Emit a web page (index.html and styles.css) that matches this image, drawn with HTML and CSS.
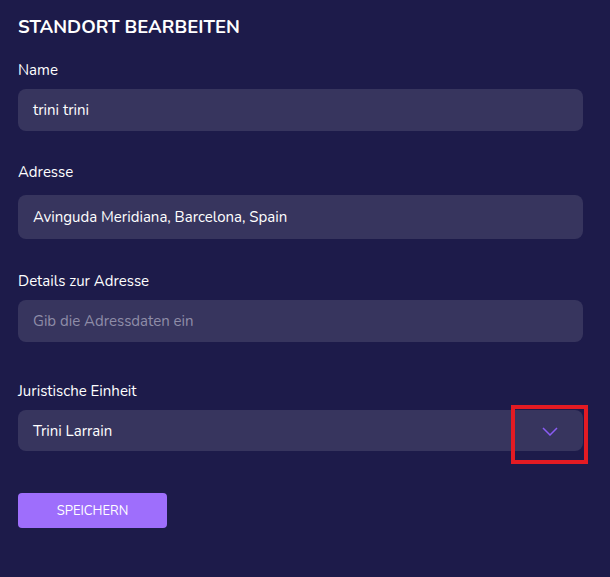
FILE: index.html
```html
<!DOCTYPE html>
<html lang="de">
<head>
<meta charset="utf-8">
<title>Standort bearbeiten</title>
<link rel="stylesheet" href="styles.css">
</head>
<body>
<form class="panel">
  <h1 class="title">STANDORT BEARBEITEN</h1>
  <div class="field">
    <label class="label">Name</label>
    <div class="input">trini trini</div>
  </div>
  <div class="field f-addr">
    <label class="label">Adresse</label>
    <div class="input tall">Avinguda Meridiana, Barcelona, Spain</div>
  </div>
  <div class="field f-details">
    <label class="label">Details zur Adresse</label>
    <div class="input placeholder">Gib die Adressdaten ein</div>
  </div>
  <div class="field f-entity">
    <label class="label">Juristische Einheit</label>
    <div class="input select">
      <span>Trini Larrain</span>
      <svg class="chev" width="16" height="9" viewBox="0 0 16 9"><path d="M1 1 L8 8 L15 1" fill="none" stroke="#8a5cf5" stroke-width="1.5"/></svg>
      <div class="highlight"></div>
    </div>
  </div>
  <button type="button" class="btn">SPEICHERN</button>
</form>
</body>
</html>
```
FILE: styles.css
```css
html, body { margin: 0; padding: 0; }
body {
  background: #1d1b4a;
  width: 610px;
  height: 577px;
  font-family: "Nunito", Lato, "Noto Sans", sans-serif;
  color: #ffffff;
}
.panel {
  padding: 14px 27px 0 18px;
  display: flex;
  flex-direction: column;
}
.title {
  margin: 0;
  font-size: 18.5px;
  font-weight: 700;
  line-height: 26px;
  letter-spacing: 0;
}
.field { display: flex; flex-direction: column; }
.field:first-of-type { margin-top: 20px; }
.label {
  font-size: 15px;
  line-height: 20px;
  margin-bottom: 9px;
}
.f-addr { margin-top: 31px; }
.f-addr .label { margin-bottom: 13px; }
.f-details { margin-top: 32px; }
.f-details .label { margin-bottom: 9px; }
.f-entity { margin-top: 39px; }
.f-entity .label { margin-bottom: 9px; }
.input {
  background: #37355e;
  border-radius: 8px;
  height: 42px;
  padding: 0 15px;
  display: flex;
  align-items: center;
  font-size: 15px;
}
.input.tall { height: 44px; }
.input.placeholder { color: #8f8da8; }
.select {
  position: relative;
  justify-content: space-between;
  height: 41px;
  padding-right: 25px;
}
.chev { display: block; margin-top: 2px; }
.highlight {
  position: absolute;
  left: 493px;
  top: -5px;
  width: 69px;
  height: 51px;
  border: 4px solid #e31b23;
}
.btn {
  margin-top: 42px;
  align-self: flex-start;
  width: 149px;
  height: 35px;
  background: #9e6efc;
  border: none;
  border-radius: 4px;
  color: #ffffff;
  font-family: inherit;
  font-size: 13px;
  padding: 0;
}
```
